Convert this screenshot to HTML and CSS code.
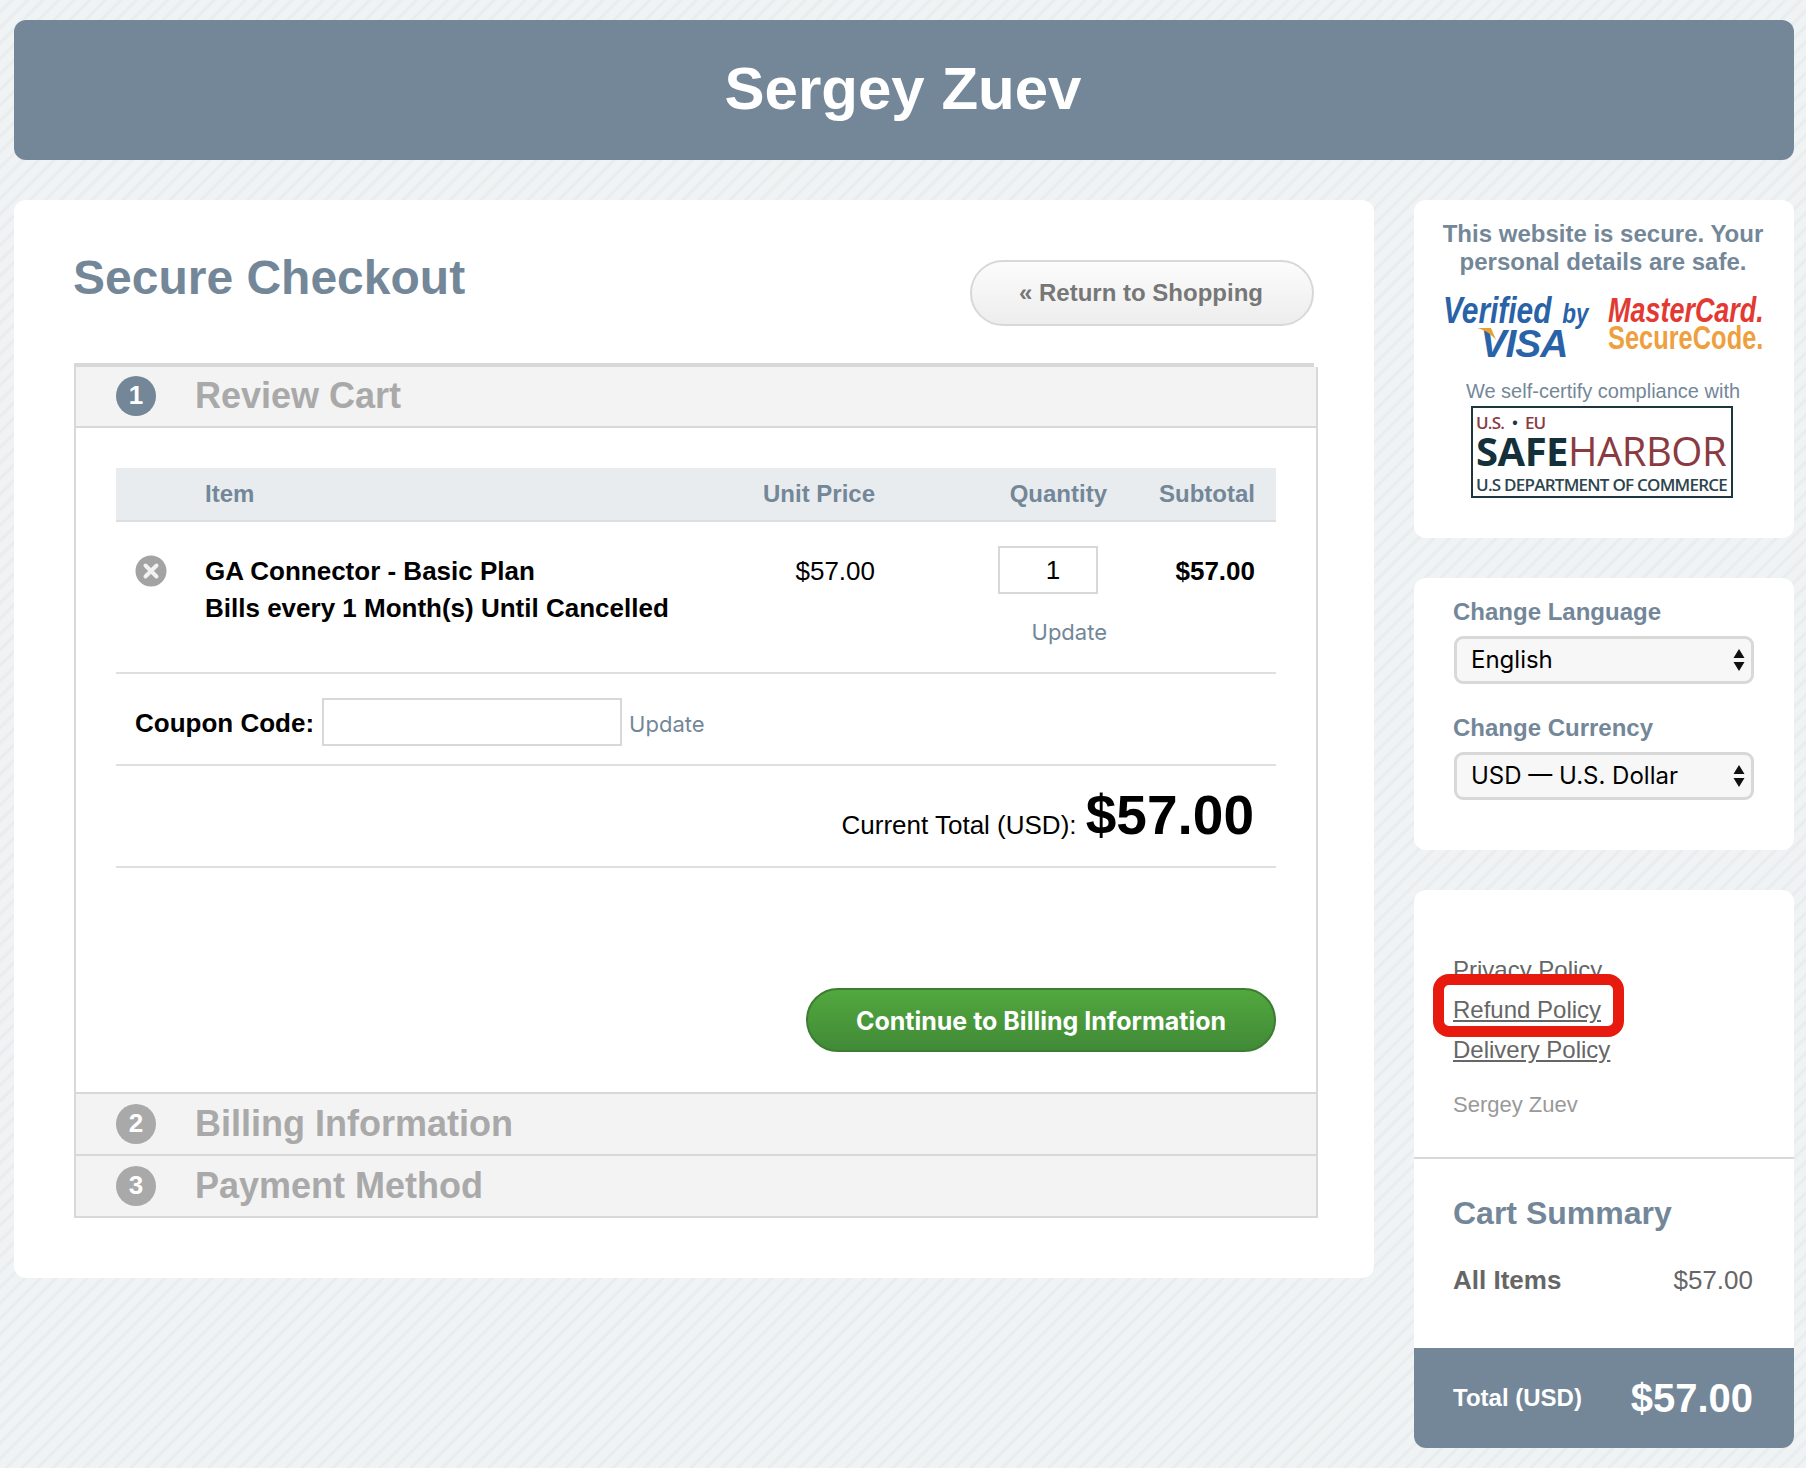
FILE: index.html
```html
<!DOCTYPE html>
<html lang="en">
<head>
<meta charset="utf-8">
<title>Secure Checkout</title>
<link rel="stylesheet" href="styles.css">
</head>
<body>
<header class="banner"><h1>Sergey Zuev</h1></header>
<div class="layout">
  <main class="card checkout">
    <div class="checkout-top">
      <h2>Secure Checkout</h2>
      <a class="btn-return" href="#">« Return to Shopping</a>
    </div>
    <div class="rule"></div>
    <section class="accordion">
      <div class="step">
        <span class="step-num active">1</span><span class="step-title">Review Cart</span>
      </div>
      <div class="step-body">
        <table class="cart">
          <colgroup><col class="c1"><col class="c2"><col class="c3"><col class="c4"><col class="c5"></colgroup>
          <thead>
            <tr><th></th><th class="left">Item</th><th>Unit Price</th><th>Quantity</th><th>Subtotal</th></tr>
          </thead>
          <tbody>
            <tr>
              <td class="remove">
                <svg width="32" height="32" viewBox="0 0 32 32"><circle cx="16" cy="16" r="15.5" fill="#a3a3a3"/><path d="M10.500 10.500l11 11M21.500 10.500l-11 11" stroke="#f2f2f2" stroke-width="4" stroke-linecap="round"/></svg>
              </td>
              <td class="left item-name">GA Connector - Basic Plan<br>Bills every 1 Month(s) Until Cancelled</td>
              <td class="price">$57.00</td>
              <td class="qty"><input class="qty-input" type="text" value="1"><a class="update qty-update" href="#">Update</a></td>
              <td class="subtotal">$57.00</td>
            </tr>
          </tbody>
        </table>
        <div class="coupon">
          <label class="coupon-label" for="coupon">Coupon Code:</label>
          <input id="coupon" class="coupon-input" type="text">
          <a class="update" href="#">Update</a>
        </div>
        <div class="total-line">Current Total (USD): <strong>$57.00</strong></div>
        <div class="continue-row"><a class="btn-continue" href="#">Continue to Billing Information</a></div>
      </div>
      <div class="step step-closed">
        <span class="step-num">2</span><span class="step-title">Billing Information</span>
      </div>
      <div class="step step-closed">
        <span class="step-num">3</span><span class="step-title">Payment Method</span>
      </div>
    </section>
  </main>
  <aside class="side">
    <div class="card secure">
      <p class="secure-title">This website is secure. Your<br>personal details are safe.</p>
      <div class="logos">
        <div class="visa">
          <div class="visa-top">Verified<span>by</span></div>
          <div class="visa-name">
            <svg class="swoosh" width="20" height="13" viewBox="0 0 20 13"><path d="M0 0h14l5 12C14 6 8 2 0 0z" fill="#e5a02e"/></svg>VISA</div>
        </div>
        <div class="mc">
          <div class="mc-top">MasterCard.</div>
          <div class="mc-bottom">SecureCode.</div>
        </div>
      </div>
      <p class="certify">We self-certify compliance with</p>
      <div class="harbor">
        <div class="harbor-top">U.S. <i>•</i> EU</div>
        <div class="harbor-name"><b>SAFE</b>HARBOR</div>
        <div class="harbor-dept">U.S DEPARTMENT OF COMMERCE</div>
      </div>
    </div>
    <div class="card settings">
      <label class="set-label" for="lang">Change Language</label>
      <div class="select-wrap">
        <select id="lang" class="select"><option>English</option></select>
        <svg class="arrows" width="12" height="22" viewBox="0 0 12 22"><path d="M6 0l5.500 9H.5zM6 22L.5 13h11z" fill="#111"/></svg>
      </div>
      <label class="set-label second" for="cur">Change Currency</label>
      <div class="select-wrap">
        <select id="cur" class="select"><option>USD — U.S. Dollar</option></select>
        <svg class="arrows" width="12" height="22" viewBox="0 0 12 22"><path d="M6 0l5.500 9H.5zM6 22L.5 13h11z" fill="#111"/></svg>
      </div>
    </div>
    <div class="card summary">
      <div class="policies">
        <a href="#">Privacy Policy</a>
        <a href="#">Refund Policy</a>
        <a href="#">Delivery Policy</a>
        <p class="owner">Sergey Zuev</p>
        <div class="highlight"></div>
      </div>
      <div class="cart-summary">
        <h3>Cart Summary</h3>
        <div class="sum-row"><b>All Items</b><span>$57.00</span></div>
      </div>
      <div class="sum-total"><b>Total (USD)</b><strong>$57.00</strong></div>
    </div>
  </aside>
</div>
</body>
</html>
```
FILE: styles.css
```css
* { box-sizing: border-box; }
html, body { margin: 0; }
body {
  padding: 20px 12px 20px 14px;
  font-family: "Liberation Sans", Arial, sans-serif;
  color: #000;
  background-color: #f0f3f4;
  background-image: repeating-linear-gradient(135deg, #f0f3f4 0, #f0f3f4 6px, #e7ebed 8.5px, #f0f3f4 11px);
}
a { color: inherit; }

.banner {
  height: 140px;
  padding-bottom: 3px;
  background: #738799;
  border-radius: 12px;
  display: flex;
  align-items: center;
  justify-content: center;
}
.banner h1 { margin: 0 2px 0 0; color: #fff; font-size: 60px; font-weight: 700; }

.layout { display: flex; gap: 40px; margin-top: 40px; align-items: flex-start; }
.card { background: #fff; border-radius: 12px; }

.checkout { width: 1360px; height: 1078px; padding: 0 60px; }
.checkout-top { height: 163px; display: flex; justify-content: space-between; align-items: flex-start; }
.checkout-top h2 { margin: 50px 0 0 -1px; font-size: 48px; line-height: 56px; color: #738799; font-weight: 700; }
.btn-return {
  margin-top: 60px;
  width: 344px;
  height: 66px;
  padding-right: 2px;
  border: 2px solid #d8d8d8;
  border-radius: 33px;
  background: linear-gradient(#fcfcfc, #ededed);
  display: flex;
  align-items: center;
  justify-content: center;
  color: #777;
  font-size: 24px;
  font-weight: 700;
  text-decoration: none;
}
.rule { width: 1240px; height: 4px; background: #d8d8d8; }
.accordion { width: 1244px; border: 2px solid #d8d8d8; border-top: 0; border-bottom: 0; }

.step {
  height: 61px;
  background: #f3f3f3;
  border-bottom: 2px solid #d8d8d8;
  display: flex;
  align-items: center;
  padding-left: 40px;
}
.step-closed { height: 62px; }
.step-num {
  width: 40px;
  height: 40px;
  border-radius: 50%;
  background: #a9a9a9;
  color: #fff;
  font-weight: 700;
  font-size: 26px;
  display: flex;
  align-items: center;
  justify-content: center;
  padding-bottom: 1px;
}
.step-num.active { background: #738799; margin-bottom: 1px; }
.step-title { margin: 0 0 1px 39px; font-size: 36px; font-weight: 700; color: #a9a9a9; }

.step-body { padding: 40px 40px 40px; border-bottom: 2px solid #d8d8d8; }

.cart { width: 1160px; border-collapse: collapse; table-layout: fixed; }
.c1 { width: 89px; }
.c2 { width: 530px; }
.c3 { width: 160px; }
.c4 { width: 232px; }
.c5 { width: 149px; }
.cart th {
  height: 53px;
  background: #e9ecef;
  border-bottom: 2px solid #dcdfe2;
  color: #738799;
  font-size: 24px;
  font-weight: 700;
  text-align: right;
  padding: 0 20px 0 0;
}
.cart th:last-child, .cart td:last-child { padding-right: 21px; }
.cart th.left, .cart td.left { text-align: left; }
.cart td {
  height: 152px;
  vertical-align: top;
  padding: 31px 20px 0 0;
  font-size: 26px;
  line-height: 37px;
  text-align: right;
  border-bottom: 2px solid #dfdfdf;
}
.cart td.remove { padding: 33px 0 0 19px; text-align: left; line-height: 0; }
.item-name { font-weight: 700; }
.subtotal { font-weight: 700; }
.cart td.qty { padding-top: 24px; }
.qty-input {
  display: block;
  width: 100px;
  height: 48px;
  margin-left: auto;
  margin-right: 9px;
  border: 2px solid #d8d8d8;
  background: #fff;
  font: 26px "Liberation Sans", Arial, sans-serif;
  text-align: center;
  padding: 0 0 0 10px;
}
.update { color: #738799; font-family: Inter, "Liberation Sans", sans-serif; font-size: 22px; text-decoration: none; }
.qty-update { display: block; margin-top: 23px; line-height: 30px; }

.coupon {
  height: 92px;
  padding: 5px 0 0 19px;
  display: flex;
  align-items: center;
  border-bottom: 2px solid #dfdfdf;
  font-size: 26px;
  font-weight: 700;
}
.coupon-label { margin-top: 4px; }
.coupon-input {
  width: 300px;
  height: 48px;
  margin: 0 7px 0 8px;
  border: 2px solid #d8d8d8;
  background: #fff;
}
.coupon .update { font-weight: 400; margin-top: 4px; }

.total-line {
  height: 102px;
  border-bottom: 2px solid #dfdfdf;
  padding-right: 22px;
  text-align: right;
  font-size: 26px;
  line-height: 98px;
}
.total-line strong { margin-left: 2px; font-size: 55px; font-weight: 700; }

.continue-row { display: flex; justify-content: flex-end; margin-top: 120px; }
.btn-continue {
  width: 470px;
  height: 64px;
  padding-top: 2px;
  border: 2px solid #3b7d31;
  border-radius: 32px;
  background: linear-gradient(#52a83e, #418a37);
  color: #fff;
  font-family: Inter, "Liberation Sans", sans-serif;
  font-size: 25px;
  font-weight: 700;
  display: flex;
  align-items: center;
  justify-content: center;
  text-decoration: none;
}

.side { width: 380px; display: flex; flex-direction: column; gap: 40px; }

.secure { height: 338px; padding-top: 20px; text-align: center; color: #738799; }
.secure-title { margin: 0 2px 0 0; font-size: 24px; line-height: 28px; font-weight: 700; }
.logos { display: flex; gap: 21px; margin: 20px 0 0 29px; height: 62px; text-align: left; }
.visa { width: 144px; color: #2a62a8; font-weight: 700; font-style: italic; position: relative; }
.visa-top { font-size: 36px; line-height: 30px; white-space: nowrap; transform: scaleX(.83); transform-origin: left; }
.visa-top span { font-size: 27px; margin-left: 13px; }
.visa-name { font-size: 39px; line-height: 30px; text-align: center; padding-left: 18px; letter-spacing: -1px; }
.swoosh { position: absolute; left: 34px; top: 32px; }
.mc { width: 156px; font-weight: 700; white-space: nowrap; }
.mc-top { font-size: 35px; line-height: 28px; color: #e23a33; font-style: italic; transform: scaleX(.77); transform-origin: left; }
.mc-bottom { font-size: 33px; line-height: 27px; color: #ee9f3e; transform: scaleX(.77); transform-origin: left; }
.certify { margin: 19px 2px 0 0; font-size: 20px; line-height: 28px; }
.harbor {
  width: 262px;
  height: 92px;
  margin: 1px 0 0 57px;
  border: 2px solid #1c3540;
  padding: 5px 2px 0 3px;
  text-align: left;
  font-family: "Open Sans", sans-serif;
  white-space: nowrap;
  overflow: hidden;
}
.harbor-top { font-size: 17px; line-height: 20px; color: #8a3a40; font-weight: 600; letter-spacing: -.8px; }
.harbor-top i { font-style: normal; color: #1c3540; margin: 0 4px; }
.harbor-name { font-size: 40px; line-height: 36px; color: #8a3a40; letter-spacing: -.5px; }
.harbor-name b { color: #14303a; }
.harbor-dept { margin-top: 5px; font-size: 17px; line-height: 22px; color: #2c454e; font-weight: 600; letter-spacing: -.75px; }

.settings { height: 272px; padding: 20px 39px 0 40px; }
.set-label { display: block; margin-left: -1px; font-size: 24px; line-height: 28px; font-weight: 700; color: #738799; }
.set-label.second { margin-top: 30px; }
.select-wrap { position: relative; margin-top: 10px; }
.select {
  display: block;
  width: 300px;
  height: 48px;
  appearance: none;
  border: 3px solid #d8d8d8;
  border-radius: 9px;
  background: #f7f7f7;
  padding: 0 0 2px 14px;
  color: #000;
  font: 24px Inter, "Liberation Sans", sans-serif;
}
.arrows { position: absolute; right: 10px; top: 13px; pointer-events: none; }

.summary { height: 558px; overflow: hidden; display: flex; flex-direction: column; }
.policies { position: relative; height: 269px; padding: 60px 39px 0; border-bottom: 2px solid #d8d8d8; }
.policies a { display: block; font-size: 24px; line-height: 40px; color: #666; }
.owner { margin: 20px 0 0; font-size: 22px; line-height: 30px; color: #999; }
.highlight {
  position: absolute;
  left: 19px;
  top: 84px;
  width: 191px;
  height: 63px;
  border: 11px solid #e8190e;
  border-radius: 16px;
}
.cart-summary { flex: 1; padding: 32px 41px 0 39px; }
.cart-summary h3 { margin: 0; font-size: 32px; line-height: 44px; font-weight: 700; color: #738799; }
.sum-row { display: flex; justify-content: space-between; align-items: baseline; margin-top: 27px; color: #666; font-size: 26px; line-height: 36px; }
.sum-row b { font-size: 26px; }
.sum-total {
  height: 100px;
  background: #738799;
  color: #fff;
  padding: 0 41px 0 39px;
  display: flex;
  justify-content: space-between;
  align-items: center;
}
.sum-total b { font-size: 24px; }
.sum-total strong { font-size: 40px; }
```
